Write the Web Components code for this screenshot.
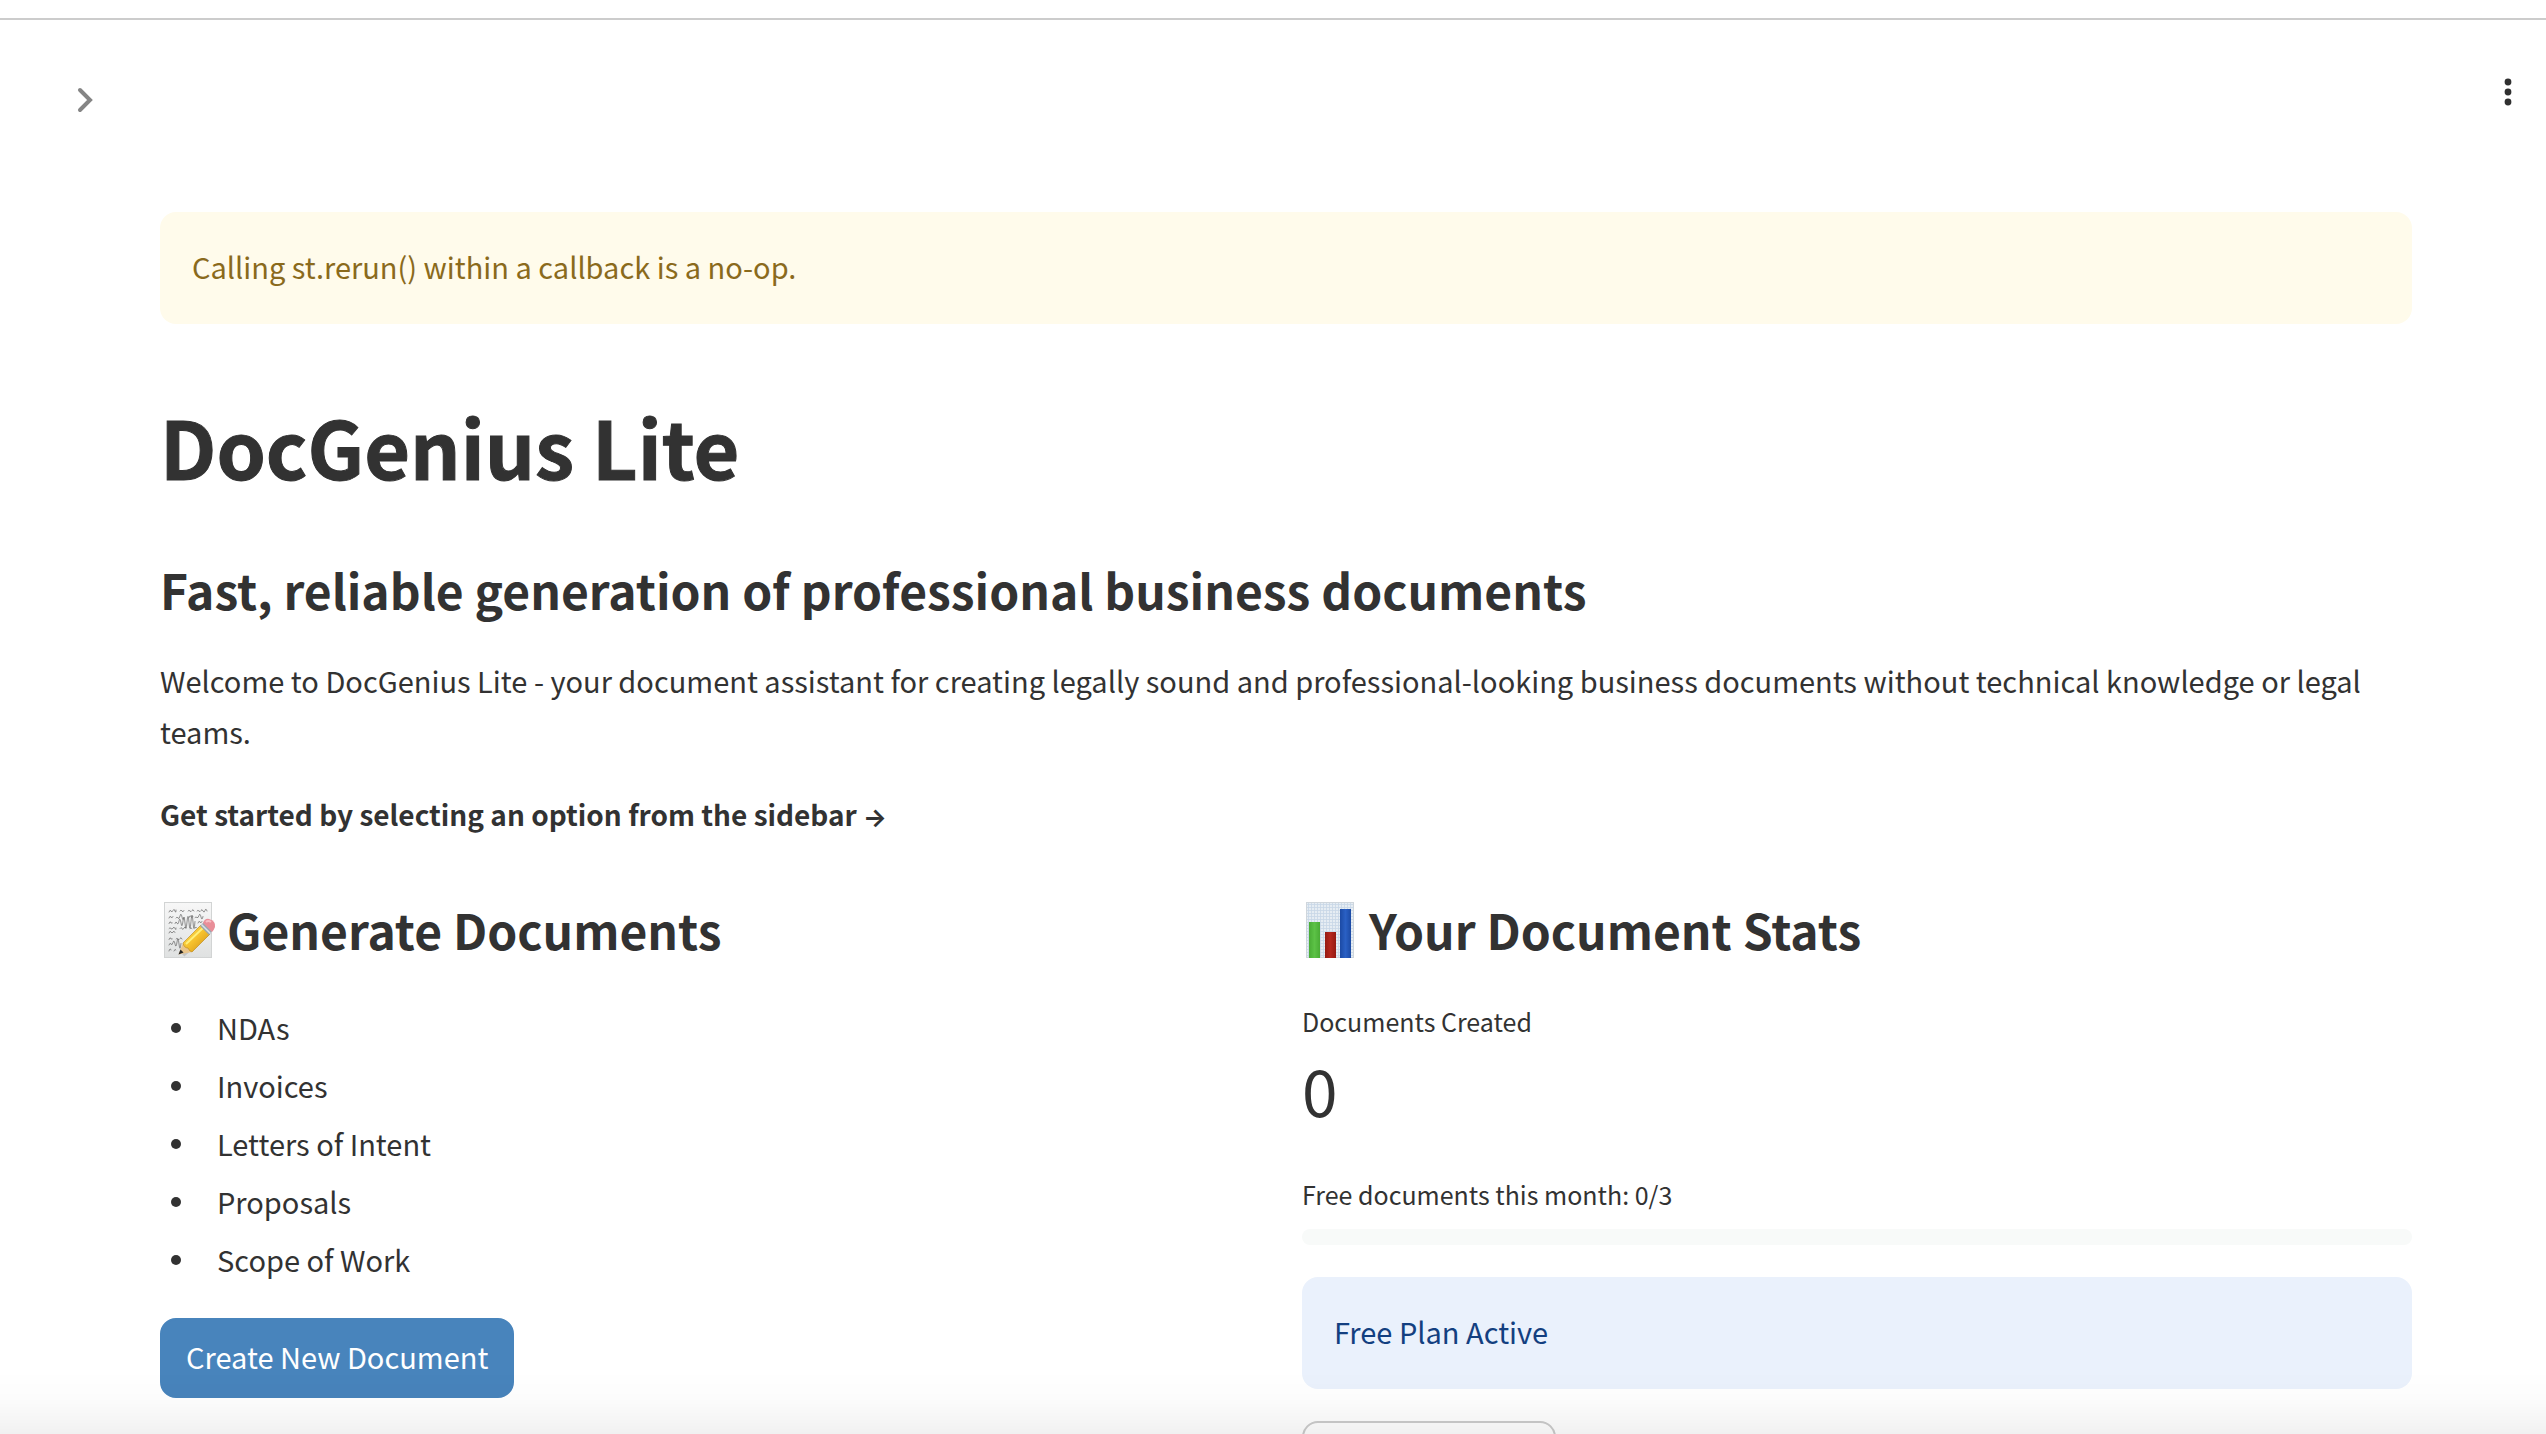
<!DOCTYPE html>
<html lang="en">
<head>
<meta charset="utf-8">
<title>DocGenius Lite</title>
<style>
  html, body { margin: 0; height: 100%; }
  body {
    overflow: hidden;
    background: #fff;
    color: #323232;
    font: 400 29px/51px "Noto Sans CJK SC", "Noto Sans", sans-serif;
    --blue: #4884bc;
  }
</style>
</head>
<body>
<doc-app></doc-app>
<script>
const define = (name, css, html) => customElements.define(name, class extends HTMLElement {
  constructor() {
    super();
    this.attachShadow({ mode: 'open' }).innerHTML = `<style>*{box-sizing:border-box}${css}</style>${html}`;
  }
});

define('app-toolbar', `
  :host { display: flex; justify-content: space-between; align-items: flex-start;
          padding: 52px 18px 0 64px; height: 192px; box-sizing: border-box; }
  button { border: 0; padding: 0; background: none; display: flex; }
  .side { padding-top: 8px; }
`, `
  <button class="side" aria-label="Open sidebar"><svg width="40" height="40" viewBox="0 0 40 40" fill="none" stroke="#858585" stroke-width="4"><path d="M16 10 26 20 16 30" stroke-linecap="round"/></svg></button>
  <button aria-label="Main menu"><svg width="40" height="40" viewBox="0 0 40 40" fill="#303030"><circle cx="20" cy="10" r="3.4"/><circle cx="20" cy="20" r="3.4"/><circle cx="20" cy="30" r="3.4"/></svg></button>
`);

define('app-alert', `
  :host { display: block; padding: 30px 32px 34px; border-radius: 16px; line-height: 48px;
          background: #fffbeb; color: #8a6a1c; }
  :host([kind=info]) { background: #eaf1fc; color: #133f80; }
`, `<div role="alert"><slot></slot></div>`);

define('section-title', `
  :host { display: block; }
  h2 { margin: 0; font-size: 48px; line-height: 67px; font-weight: 600; display: flex; gap: 11px; align-items: center; }
  ::slotted(svg) { flex: none; }
`, `<h2><slot name="icon"></slot><slot></slot></h2>`);

define('bullet-list', `
  :host { display: block; }
  ul { list-style: none; margin: 0; padding: 0; display: flex; flex-direction: column; gap: 7px; }
`, `<ul><slot></slot></ul>`);

define('bullet-item', `
  :host { display: flex; align-items: center; gap: 36px; padding-left: 11px; }
  i { width: 10px; height: 10px; border-radius: 50%; background: currentColor; }
`, `<i></i><span><slot></slot></span>`);

define('app-button', `
  :host { display: block; }
  button { font: inherit; line-height: 48px; padding: 12px 24px 16px; height: 80px; border: 2px solid var(--blue);
           border-radius: 16px; background: var(--blue); color: #fff; }
  :host([kind=secondary]) button { background: #fff; border-color: #ccc; min-width: 254px; }
`, `<button><slot></slot></button>`);

define('stat-metric', `
  :host { display: block; }
  .label { font-size: 25px; line-height: 40px; }
  .value { font-size: 64px; line-height: 96px; }
`, `<div class="label"><slot></slot></div><div class="value"><slot name="value"></slot></div>`);

define('usage-bar', `
  :host { display: flex; flex-direction: column; gap: 15px; font-size: 25px; line-height: 40px; }
  .track { height: 16px; border-radius: 8px; background: #f8faf9; }
`, `<div id="l"><slot></slot></div><div class="track" role="progressbar" aria-labelledby="l" aria-valuenow="0" aria-valuemax="3"></div>`);

define('doc-app', `
  :host { display: block; border-top: 2px solid #ccc; margin-top: 18px; box-sizing: border-box; }
  main { padding: 0 134px 0 160px; }
  h1 { margin: 69px 0 57px; font-size: 79px; line-height: 106px; font-weight: 700; -webkit-text-stroke: 1px currentColor; }
  p { margin: 32px 0; }
  strong { display: block; font-size: 28px; }
  .cols { display: grid; grid-template-columns: 1fr 1fr; gap: 32px; margin-top: 56px; }
  bullet-list { margin: 39px 0 33px; }
  stat-metric { margin: 38px 0 37px; }
  app-alert[kind=info] { margin: 32px 0; }
  .arrow { font-family: Inter, sans-serif; font-size: 25px; line-height: 1; }
  .fade { position: fixed; inset: auto 0 0 0; height: 64px; pointer-events: none;
          background: linear-gradient(#0000, rgba(0,0,0,.012) 45%, rgba(0,0,0,.055)); }
`, `
  <app-toolbar></app-toolbar>
  <main>
    <app-alert>Calling st.rerun() within a callback is a no-op.</app-alert>
    <h1>DocGenius Lite</h1>
    <section-title>Fast, reliable generation of professional business documents</section-title>
    <p>Welcome to DocGenius Lite - your document assistant for creating legally sound and professional-looking business documents without technical knowledge or legal teams.</p>
    <p><strong>Get started by selecting an option from the sidebar <span class="arrow">→</span></strong></p>
    <div class="cols">
      <section>
        <section-title>
          <svg slot="icon" width="56" height="58" viewBox="0 0 56 58">
            <defs>
              <linearGradient id="pg" x2="0" y2="1"><stop stop-color="#f7f7f7"/><stop offset="1" stop-color="#dfe1e1"/></linearGradient>
              <linearGradient id="pn" x1="0" y1="0" x2="1" y2="1"><stop stop-color="#ffe45c"/><stop offset=".5" stop-color="#f5c02c"/><stop offset="1" stop-color="#c98a12"/></linearGradient>
            </defs>
            <rect x="4.5" y="1.5" width="47" height="55" fill="url(#pg)" stroke="#d2d4d4"/>
            <g fill="none" stroke="#666" stroke-width=".7" stroke-linecap="round" stroke-linejoin="round">
              <path d="M9 11q1-3 2-1t2-.5 2 .5 1-1M20 10q1-2 2 0t2-.5M28 10q1-1.500 2 0t2-.5 2 .5M37 10q1-1.500 2 0t2-.5 2 .5 2-.5 2 .5"/>
              <path d="M9 17q1-3 2-1t2-.5M16 17q1-2 2 0t2-2 2 1 2 .5M29 16.500q1-3 2-1t2 0M35 16.500q1-1 2 0t2-2 2 1.500 2-.5"/>
              <path d="M9 22.500q1-3 2-1t1 0M15 22.500q1-3 2-.5t2-2 2 2 2-2 2 2 2-1 2 .5 2-1 2 .5 2-.5M38 22q1-3 2-1t2-.5"/>
              <path d="M9 27.500q1-1.500 2 0t2-.5 2 .5 1-.5M20 27.500q1-2 2 0t2-.5 2 .5M30 27.500q1-1.500 2 0M35 27q1-2 2 0"/>
              <path d="M9 32q1-3 2-1t2 0 2 .5"/>
              <path d="M9 38.500q1-3 2-1t1 0M16 38q1-1.500 2 0t2-.5 2 .5"/>
              <path d="M9 44q1-3 2-1t2-1.500 2 1.500 2-2 2 2 2-.5"/>
              <path d="M9 50q1-4 2-1M14 50q1-3 2-1"/>
            </g>
            <path d="M23 54 50 31" stroke="#0002" stroke-width="4"/>
            <path d="M18.500 53.500 23 42 32 51Z" fill="#e9c58c"/>
            <path d="M23 42 41 24 50 33 32 51Q29 50 28 47 24 47 23 42Z" fill="url(#pn)" stroke="#b98414" stroke-width=".6"/>
            <path d="m26 43 18-17" stroke="#fff07a" stroke-width="2"/>
            <path d="M18.500 53.500 20.500 48.500 23.500 51.500Z" fill="#222"/>
            <path d="M40 25 44 21 53 29 49 34Z" fill="#9aa6b0"/>
            <path d="m41.500 23.500 9 9" stroke="#dbe2e8" stroke-width="1.500"/>
            <path d="M43 22Q45 17 49 18 56 20 55 26 54 29 52 31Z" fill="#e98e98"/>
            <path d="M46 21q2-2 5 0" stroke="#f8bcc2" stroke-width="2" fill="none"/>
          </svg>Generate Documents</section-title>
        <bullet-list>
          <bullet-item role="listitem">NDAs</bullet-item>
          <bullet-item role="listitem">Invoices</bullet-item>
          <bullet-item role="listitem">Letters of Intent</bullet-item>
          <bullet-item role="listitem">Proposals</bullet-item>
          <bullet-item role="listitem">Scope of Work</bullet-item>
        </bullet-list>
        <app-button>Create New Document</app-button>
      </section>
      <section>
        <section-title>
          <svg slot="icon" width="56" height="58" viewBox="0 0 56 58">
            <defs>
              <pattern id="gr" width="3" height="3" patternUnits="userSpaceOnUse"><rect width="3" height="3" fill="#e6edf3"/><path d="M0 .5H3M.5 0V3" stroke="#c8d7e6" stroke-width=".8"/></pattern>
              <linearGradient id="g1"><stop stop-color="#49ac35"/><stop offset=".5" stop-color="#5cc246"/><stop offset="1" stop-color="#49ac35"/></linearGradient>
              <linearGradient id="g2"><stop stop-color="#951a12"/><stop offset=".5" stop-color="#b5271d"/><stop offset="1" stop-color="#951a12"/></linearGradient>
              <linearGradient id="g3"><stop stop-color="#1c4aa4"/><stop offset=".5" stop-color="#2a60c4"/><stop offset="1" stop-color="#1c4aa4"/></linearGradient>
            </defs>
            <rect x="4" y="1" width="48" height="56" fill="url(#gr)"/>
            <rect x="4.500" y="1.500" width="47" height="55" fill="none" stroke="#cfd6dc"/>
            <rect x="7" y="21" width="11" height="36" fill="url(#g1)"/>
            <rect x="23" y="31" width="11" height="26" fill="url(#g2)"/>
            <rect x="38" y="8" width="11" height="49" fill="url(#g3)"/>
          </svg>Your Document Stats</section-title>
        <stat-metric>Documents Created<span slot="value">0</span></stat-metric>
        <usage-bar>Free documents this month: 0/3</usage-bar>
        <app-alert kind="info">Free Plan Active</app-alert>
        <app-button kind="secondary"></app-button>
      </section>
    </div>
  </main>
  <div class="fade"></div>
`);
</script>
</body>
</html>
